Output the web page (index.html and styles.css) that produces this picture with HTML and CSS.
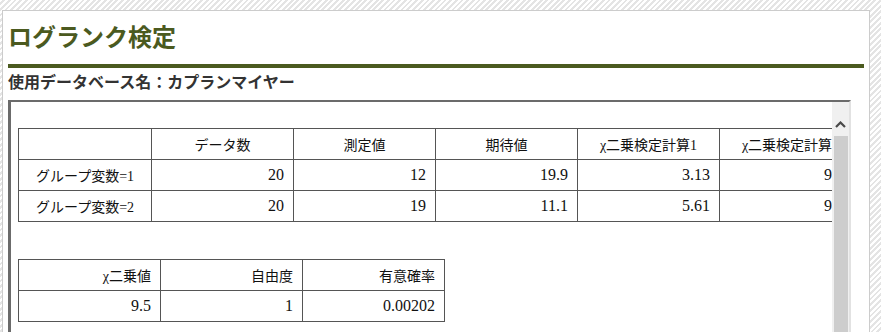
FILE: index.html
```html
<!DOCTYPE html>
<html lang="ja">
<head>
<meta charset="utf-8">
<title>ログランク検定</title>
<link rel="stylesheet" href="styles.css">
</head>
<body>
<div class="panel">
  <h1 class="title">ログランク検定</h1>
  <h2 class="subtitle">使用データベース名：カプランマイヤー</h2>
  <div class="result-box">
    <div class="result-content">
      <table class="grid grid-main">
        <colgroup><col class="c-label"><col class="c-val"><col class="c-val"><col class="c-val"><col class="c-val"><col class="c-val"></colgroup>
        <tr>
          <th></th><th>データ数</th><th>測定値</th><th>期待値</th><th>χ二乗検定計算1</th><th>χ二乗検定計算2</th>
        </tr>
        <tr>
          <td class="label">グループ変数=1</td><td class="num">20</td><td class="num">12</td><td class="num">19.9</td><td class="num">3.13</td><td class="num">9.50</td>
        </tr>
        <tr>
          <td class="label">グループ変数=2</td><td class="num">20</td><td class="num">19</td><td class="num">11.1</td><td class="num">5.61</td><td class="num">9.50</td>
        </tr>
      </table>
      <table class="grid grid-summary">
        <colgroup><col class="c-val"><col class="c-val"><col class="c-val"></colgroup>
        <tr>
          <th class="right">χ二乗値</th><th class="right">自由度</th><th class="right">有意確率</th>
        </tr>
        <tr>
          <td class="num">9.5</td><td class="num">1</td><td class="num">0.00202</td>
        </tr>
      </table>
    </div>
    <div class="scrollbar">
      <div class="scroll-btn">
        <svg width="11" height="7" viewBox="0 0 11 7"><path d="M1 6 L5.5 1.5 L10 6" fill="none" stroke="#4a4a4a" stroke-width="2.2"/></svg>
      </div>
      <div class="scroll-thumb"></div>
    </div>
  </div>
</div>
</body>
</html>
```
FILE: styles.css
```css
html, body {
  margin: 0;
  padding: 0;
}
body {
  width: 881px;
  height: 332px;
  overflow: hidden;
  background: repeating-linear-gradient(135deg, #ffffff 0 2px, #e4e4e4 2px 4px);
  font-family: "Noto Sans CJK JP", sans-serif;
}
.panel {
  margin: 10px 11px 0 2px;
  border: 1px solid #cccccc;
  border-bottom: none;
  background: #ffffff;
  padding: 0 5px;
  height: 400px;
}
.title {
  margin: 0;
  padding: 8px 0 11px;
  font-size: 24px;
  line-height: 34px;
  font-weight: bold;
  color: #4b5a1f;
  border-bottom: 4px solid #4b5a1f;
}
.subtitle {
  margin: 2px 0 0;
  font-size: 16px;
  line-height: 23px;
  font-weight: bold;
  color: #333333;
}
.result-box {
  margin-top: 7px;
  width: 843px;
  height: 300px;
  box-sizing: border-box;
  display: flex;
  border-style: solid;
  border-width: 2px 2px 0 3px;
  border-color: #6b6b6b #e2e2e2 #e2e2e2 #6b6b6b;
}
.result-content {
  flex: 1;
  min-width: 0;
  overflow: hidden;
  padding: 26px 0 0 7px;
}
.scrollbar {
  width: 17px;
  flex: none;
  background: #f0f0f0;
  display: flex;
  flex-direction: column;
  align-items: center;
}
.scroll-btn {
  height: 34px;
  box-sizing: border-box;
  padding-bottom: 8px;
  display: flex;
  align-items: flex-end;
  justify-content: center;
  width: 17px;
}
.scroll-btn svg {
  display: block;
}
.scroll-thumb {
  width: 14px;
  flex: 1;
  background: #cdcdcd;
}
.grid {
  border-collapse: collapse;
  table-layout: fixed;
  font-family: "Liberation Serif", "Noto Sans CJK JP", serif;
  color: #111111;
}
.grid-main {
  width: 844px;
  margin-bottom: 37px;
}
.grid-summary {
  width: 427px;
}
.c-label { width: 133px; }
.c-val { width: 142px; }
.grid th, .grid td {
  border: 1px solid #555555;
  height: 30px;
  padding: 0 9px;
  font-size: 14px;
  font-weight: normal;
  white-space: nowrap;
  overflow: hidden;
  text-align: center;
}
.grid th.right { text-align: right; }
.grid td.num {
  font-size: 16px;
  text-align: right;
}
```
